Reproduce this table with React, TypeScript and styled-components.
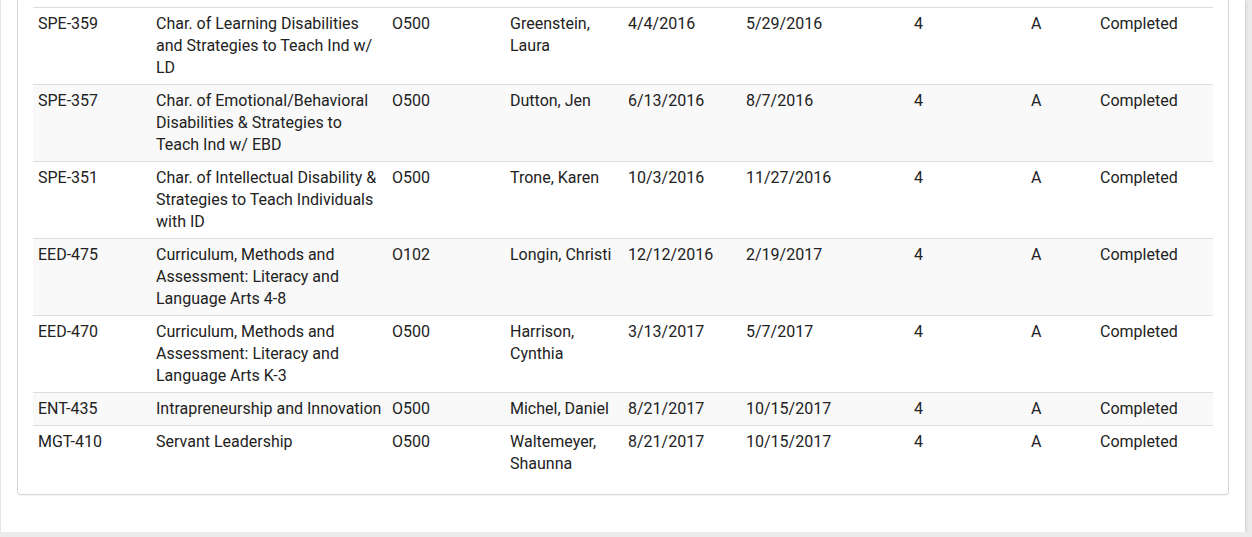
import React from 'react';
import styled, { createGlobalStyle } from 'styled-components';

const GlobalStyle = createGlobalStyle`
  html, body {
    margin: 0;
    padding: 0;
    background: #ececec;
  }
  body {
    font-family: Roboto, "Liberation Sans", Arial, sans-serif;
    color: #212121;
  }
`;

type Course = {
  code: string;
  title: string;
  section: string;
  instructor: string;
  start: string;
  end: string;
  credits: string;
  grade: string;
  status: string;
};

const courses: Course[] = [
  { code: 'SPE-359', title: 'Char. of Learning Disabilities and Strategies to Teach Ind w/ LD', section: 'O500', instructor: 'Greenstein, Laura', start: '4/4/2016', end: '5/29/2016', credits: '4', grade: 'A', status: 'Completed' },
  { code: 'SPE-357', title: 'Char. of Emotional/Behavioral Disabilities & Strategies to Teach Ind w/ EBD', section: 'O500', instructor: 'Dutton, Jen', start: '6/13/2016', end: '8/7/2016', credits: '4', grade: 'A', status: 'Completed' },
  { code: 'SPE-351', title: 'Char. of Intellectual Disability & Strategies to Teach Individuals with ID', section: 'O500', instructor: 'Trone, Karen', start: '10/3/2016', end: '11/27/2016', credits: '4', grade: 'A', status: 'Completed' },
  { code: 'EED-475', title: 'Curriculum, Methods and Assessment: Literacy and Language Arts 4-8', section: 'O102', instructor: 'Longin, Christi', start: '12/12/2016', end: '2/19/2017', credits: '4', grade: 'A', status: 'Completed' },
  { code: 'EED-470', title: 'Curriculum, Methods and Assessment: Literacy and Language Arts K-3', section: 'O500', instructor: 'Harrison, Cynthia', start: '3/13/2017', end: '5/7/2017', credits: '4', grade: 'A', status: 'Completed' },
  { code: 'ENT-435', title: 'Intrapreneurship and Innovation', section: 'O500', instructor: 'Michel, Daniel', start: '8/21/2017', end: '10/15/2017', credits: '4', grade: 'A', status: 'Completed' },
  { code: 'MGT-410', title: 'Servant Leadership', section: 'O500', instructor: 'Waltemeyer, Shaunna', start: '8/21/2017', end: '10/15/2017', credits: '4', grade: 'A', status: 'Completed' },
];

const widths = [118, 236, 118, 118, 118, 168, 117, 69, 118];

export default function App() {
  return (
    <>
      <GlobalStyle />
      <Panel>
        <Card>
          <Table>
            <colgroup>
              {widths.map((w, i) => (
                <col key={i} style={{ width: w }} />
              ))}
            </colgroup>
            <tbody>
              {courses.map((c, i) => (
                <Row key={c.code} $striped={i % 2 === 1}>
                  <Cell>{c.code}</Cell>
                  <Cell>{c.title}</Cell>
                  <Cell>{c.section}</Cell>
                  <Cell>{c.instructor}</Cell>
                  <Cell>{c.start}</Cell>
                  <Cell>{c.end}</Cell>
                  <Cell>{c.credits}</Cell>
                  <Cell>{c.grade}</Cell>
                  <Cell>{c.status}</Cell>
                </Row>
              ))}
            </tbody>
          </Table>
        </Card>
      </Panel>
    </>
  );
}

const Panel = styled.div`
  width: 1245px;
  height: 532px;
  box-sizing: border-box;
  background: #fff;
  border-left: 1px solid #e4e4e4;
  box-shadow: 0 1px 4px rgba(0, 0, 0, 0.22);
  padding: 0 16px 0 16px;
`;

const Card = styled.div`
  box-sizing: border-box;
  width: 1212px;
  padding: 7px 15px 14px 15px;
  border: 1px solid #d6d6d6;
  border-top: none;
  border-radius: 0 0 4px 4px;
  box-shadow: 0 1px 1px rgba(0, 0, 0, 0.05);
`;

const Table = styled.table`
  width: 1180px;
  table-layout: fixed;
  border-collapse: collapse;
  border-spacing: 0;
  font-size: 16px;
  line-height: 22px;
`;

const Row = styled.tr<{ $striped: boolean }>`
  background: ${(p) => (p.$striped ? '#f9f9f9' : '#fff')};
  border-top: 1px solid #dddddd;
`;

const Cell = styled.td`
  padding: 5px;
  vertical-align: top;
  text-align: left;
  color: #222;
`;
